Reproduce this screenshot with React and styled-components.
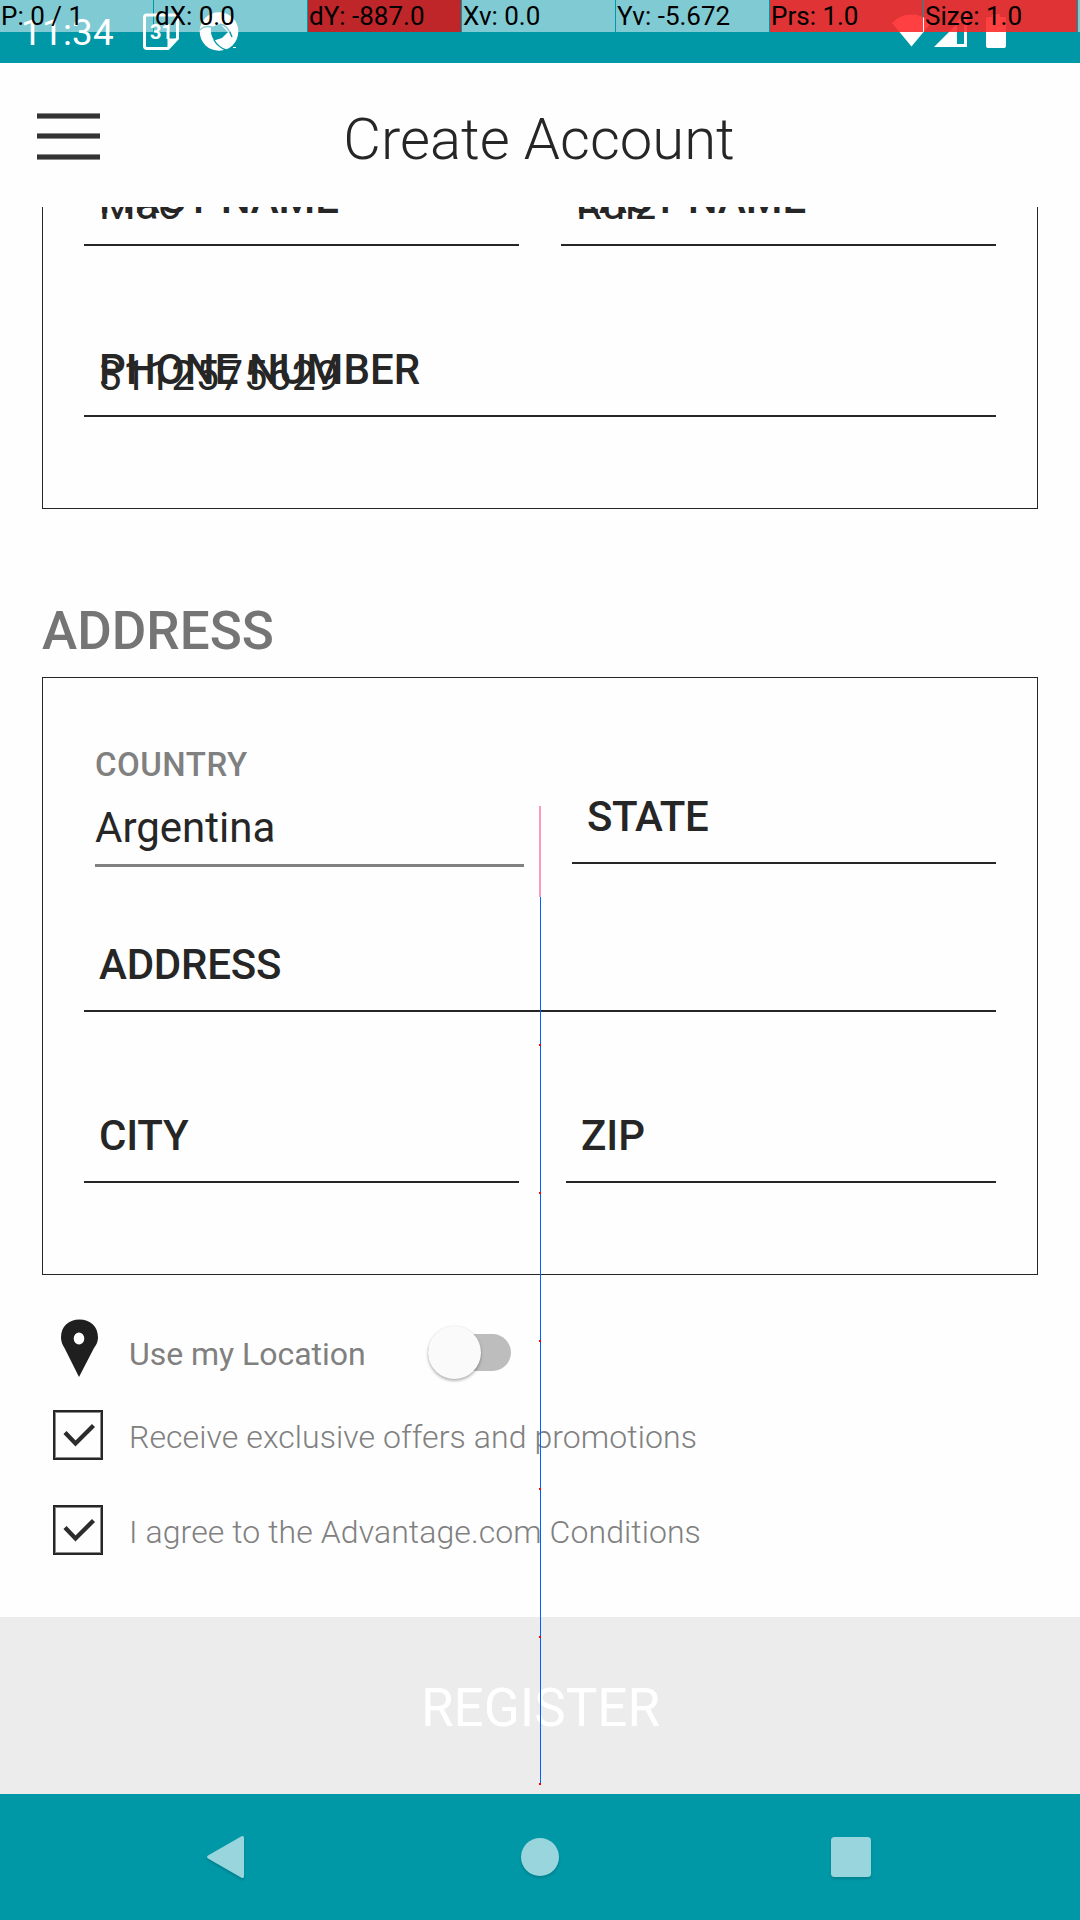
import React from 'react';
import styled, { createGlobalStyle } from 'styled-components';

const GlobalStyle = createGlobalStyle`
  * { box-sizing: border-box; }
  body { margin: 0; background: #fefefe; font-family: Roboto, "Noto Sans", sans-serif; }
`;

const ink = '#262626';
const teal = '#0097a7';

const Screen = styled.div`
  position: relative;
  display: flex;
  flex-direction: column;
  width: 1080px;
  height: 1920px;
  overflow: hidden;
  background: #fefefe;
`;

const StatusBar = styled.div`
  position: relative;
  display: flex;
  flex: none;
  height: 63px;
  padding-left: 21px;
  background: ${teal};
`;
const Clock = styled.div`
  width: 121px;
  padding-top: 11px;
  color: #fff;
  font-size: 36.75px;
  line-height: 44px;
  letter-spacing: 0.3px;
`;
const StatusIcons = styled.svg`
  flex: none;
  width: ${(p) => p.$w}px;
  height: 63px;
  margin-left: ${(p) => p.$ml || 0}px;
`;

const PointerBar = styled.div`
  position: absolute;
  inset: 0 0 auto 0;
  display: grid;
  grid-template-columns: repeat(7, 153px) 2px;
  column-gap: 1px;
  height: 32px;
`;
const PointerCell = styled.div`
  padding-left: 1px;
  overflow: hidden;
  color: #000;
  font-size: 26px;
  line-height: 33px;
  white-space: nowrap;
  background: ${(p) =>
    p.$tone === 'moved'
      ? 'rgba(255,0,0,.75)'
      : p.$tone === 'pressed'
      ? 'linear-gradient(rgba(255,0,0,.75), rgba(255,0,0,.75)), rgba(255,255,255,.5)'
      : 'rgba(255,255,255,.5)'};
`;

const Header = styled.header`
  display: grid;
  grid-template-columns: 136px 1fr 136px;
  align-items: center;
  flex: none;
  height: 144px;
`;
const MenuButton = styled.div`
  display: flex;
  flex-direction: column;
  gap: 14.5px;
  width: 63px;
  margin: 2px 0 0 36.5px;
`;
const MenuBar = styled.span`
  height: 6px;
  background: #333;
  box-shadow: inset 0 1px #8a8a8a, inset 0 -1px #8a8a8a;
`;
const Title = styled.h1`
  margin: 8px 2px 0 0;
  color: ${ink};
  font-size: 58px;
  font-weight: 300;
  line-height: 68px;
  text-align: center;
`;

const Content = styled.main`
  display: flex;
  flex-direction: column;
  flex: none;
  height: 1587px;
  overflow: hidden;
`;
const Card = styled.section`
  flex: none;
  margin: ${(p) => p.$mt || 0}px 42px 0;
  padding: 0 41px 91px;
  border: 1px solid ${ink};
`;
const Heading = styled.h2`
  flex: none;
  margin: 91px 42px 15px;
  color: #757575;
  font-size: 53px;
  font-weight: 500;
  line-height: 62px;
`;
const Row = styled.div`
  display: flex;
  align-items: stretch;
  gap: ${(p) => p.$gap || 42}px;
  height: ${(p) => p.$h}px;
`;
const Field = styled.div`
  display: grid;
  align-items: end;
  flex: ${(p) => (p.$w ? `0 0 ${p.$w}px` : 1)};
  margin-bottom: ${(p) => p.$mb || 0}px;
  padding-left: 15px;
  border-bottom: 2px solid ${ink};
`;
const FieldLabel = styled.label`
  grid-area: 1 / 1;
  margin-bottom: 20px;
  color: ${ink};
  font-size: 42px;
  font-weight: 500;
  line-height: 50px;
  letter-spacing: ${(p) => p.$tracking}px;
`;
const FieldValue = styled.span`
  grid-area: 1 / 1;
  margin-bottom: 14px;
  color: ${ink};
  font-size: 42px;
  line-height: 50px;
  letter-spacing: ${(p) => p.$tracking}px;
`;
const Select = styled.div`
  display: flex;
  flex-direction: column;
  justify-content: flex-end;
  width: 429px;
  margin-left: 11px;
  padding-bottom: 11px;
  border-bottom: 3px solid #808080;
`;
const SelectLabel = styled.span`
  margin-bottom: 18px;
  color: #808080;
  font-size: 33px;
  font-weight: 500;
  line-height: 40px;
  letter-spacing: 0.5px;
`;
const SelectValue = styled.span`
  color: ${ink};
  font-size: 42px;
  line-height: 50px;
`;

const Options = styled.section`
  display: flex;
  flex-direction: column;
  gap: 1px;
  flex: 1;
  padding: 42px 0 0 53px;
`;
const OptionRow = styled.div`
  display: flex;
  align-items: center;
  height: ${(p) => p.$h}px;
`;
const OptionText = styled.span`
  width: ${(p) => p.$w || 'auto'};
  margin-left: 26px;
  padding-top: ${(p) => p.$pt}px;
  color: #808080;
  font-size: 32px;
  font-weight: ${(p) => p.$weight};
  line-height: 40px;
  letter-spacing: ${(p) => (p.$weight === 300 ? 0.08 : -0.03)}px;
  white-space: nowrap;
`;
const PinIcon = styled.svg`
  width: 50px;
  height: 60px;
  margin-top: -9px;
`;
const Checkbox = styled.div`
  width: 50px;
  height: 50px;
  border: 2px solid ${ink};
  box-shadow: inset 0 0 0 1px #8c8c8c;
`;
const CheckIcon = styled.svg`
  display: block;
  width: 46px;
  height: 46px;
`;
const Track = styled.div`
  width: 83px;
  height: 37px;
  border-radius: 19px;
  background: #bdbdbd;
`;
const Thumb = styled.div`
  width: 53px;
  height: 53px;
  margin: -8px 0 0 0;
  border-radius: 50%;
  background: #fafafa;
  box-shadow: 0 2px 3px rgba(0, 0, 0, 0.28), 0 0 2px rgba(0, 0, 0, 0.1);
`;
const RegisterButton = styled.div`
  flex: none;
  height: 177px;
  padding: 60px 0 0 1px;
  color: #fff;
  font-size: 53px;
  line-height: 62px;
  text-align: center;
  background: #ececec;
`;

const NavBar = styled.nav`
  flex: none;
  height: 126px;
  background: ${teal};
`;
const NavIcons = styled.svg`
  display: block;
  filter: drop-shadow(0 2px 1px rgba(0, 0, 0, 0.15));
`;

const Trail = styled.div`
  position: absolute;
  top: 806px;
  left: 539px;
  width: 2px;
  height: 979px;
`;
const TrailPredicted = styled.div`
  height: 91px;
  background: #ff9abb;
`;
const TrailPath = styled.div`
  width: 1px;
  height: 887px;
  margin-left: 1px;
  background: #0061ff;
`;
const TrailPoint = styled.div`
  position: absolute;
  left: 0;
  top: ${(p) => p.$y}px;
  width: 2px;
  height: 2px;
  background: #f00;
`;

const readings = [
  ['P: 0 / 1'],
  ['dX: 0.0'],
  ['dY: -887.0', 'moved'],
  ['Xv: 0.0'],
  ['Yv: -5.672'],
  ['Prs: 1.0', 'pressed'],
  ['Size: 1.0', 'pressed'],
  [''],
];

const trailPoints = [238, 386, 534, 682, 830, 977];

function TextField({ label, value, mb, width, tracking = -0.2, valueTracking = 0 }) {
  return (
    <Field $mb={mb} $w={width}>
      <FieldLabel $tracking={tracking}>{label}</FieldLabel>
      {value && <FieldValue $tracking={valueTracking}>{value}</FieldValue>}
    </Field>
  );
}

function Checked() {
  return (
    <Checkbox>
      <CheckIcon viewBox="0 0 46 46" fill="none" stroke="#2c2c2c" strokeWidth="4.3">
        <path d="M10 20.500 20.500 31.500 38.500 13.500" />
      </CheckIcon>
    </Checkbox>
  );
}

export default function App() {
  return (
    <Screen>
      <GlobalStyle />
      <StatusBar>
        <Clock>11:34</Clock>
        <StatusIcons $w={100} viewBox="142 0 100 63">
          <path
            d="M147 15H175Q177.500 15 177.500 17.500V38.500L168 48.500H147Q144.500 48.500 144.500 46V17.500Q144.500 15 147 15Z"
            fill="none"
            stroke="#fff"
            strokeWidth="3"
          />
          <path d="M167.500 49V38.500H178Z" fill="#fff" />
          <text x="150" y="39" fill="#fff" fontSize="20" fontWeight="700">31</text>
          <circle cx="219" cy="31.500" r="19.300" fill="#fff" />
          <path d="M211 27 220 24 228 32 222 38 214 40.500Q210 34 211 27Z" fill={teal} />
          <path
            d="M200 30Q204 25 212 27M220 24Q228 25 232 37M214 40Q218 47 226 50"
            fill="none"
            stroke={teal}
            strokeWidth="1.400"
          />
          <path d="M233 47.500H236" stroke="#fff" strokeWidth="1" />
        </StatusIcons>
        <StatusIcons $w={130} $ml={640} viewBox="882 0 130 63">
          <path d="M911.500 46.500 892 23Q900 14.500 911.500 14.500T931 23Z" fill="#fff" />
          <path d="M934 47 957 24V47Z" fill="#fff" />
          <path d="M957 24 965.500 15.500V45.500H957" fill="none" stroke="#fff" strokeWidth="3" />
          <path d="M988 17H992V14H1000V17H1004Q1006 17 1006 19V46Q1006 48 1004 48H988Q986 48 986 46V19Q986 17 988 17Z" fill="#fff" />
        </StatusIcons>
        <PointerBar>
          {readings.map(([text, tone], i) => (
            <PointerCell key={i} $tone={tone}>{text}</PointerCell>
          ))}
        </PointerBar>
      </StatusBar>

      <Header>
        <MenuButton>
          <MenuBar />
          <MenuBar />
          <MenuBar />
        </MenuButton>
        <Title>Create Account</Title>
      </Header>

      <Content>
        <Card $mt={-173}>
          <Row $h={211}>
            <TextField label="FIRST NAME" value="Mac" tracking={-0.05} />
            <TextField label="LAST NAME" value="Ruiz" tracking={0.05} />
          </Row>
          <Row $h={171}>
            <TextField label="PHONE NUMBER" value="3112575629" tracking={0.1} valueTracking={0.5} />
          </Row>
        </Card>

        <Heading>ADDRESS</Heading>
        <Card>
          <Row $h={189} $gap={48}>
            <Select>
              <SelectLabel>COUNTRY</SelectLabel>
              <SelectValue>Argentina</SelectValue>
            </Select>
            <TextField label="STATE" mb={3} tracking={-0.5} />
          </Row>
          <Row $h={145}>
            <TextField label="ADDRESS" />
          </Row>
          <Row $h={171} $gap={47}>
            <TextField label="CITY" width={435} />
            <TextField label="ZIP" tracking={0} />
          </Row>
        </Card>

        <Options>
          <OptionRow $h={70}>
            <PinIcon viewBox="53 1318 50 60">
              <path
                fillRule="evenodd"
                fill="#1f1f1f"
                d="M79 1377 64.500 1348Q61 1343 61 1337.500C61 1326 69 1319.500 79.500 1319.500S98 1326 98 1337.500Q98 1343 94 1348ZM79 1332.500A5.300 6 0 1 0 79 1344.500A5.300 6 0 1 0 79 1332.500Z"
              />
            </PinIcon>
            <OptionText $weight={400} $pt={3} $w="299px">Use my Location</OptionText>
            <Track>
              <Thumb />
            </Track>
          </OptionRow>
          <OptionRow $h={94}>
            <Checked />
            <OptionText $weight={300} $pt={4}>Receive exclusive offers and promotions</OptionText>
          </OptionRow>
          <OptionRow $h={94}>
            <Checked />
            <OptionText $weight={300} $pt={4}>I agree to the Advantage.com Conditions</OptionText>
          </OptionRow>
        </Options>

        <RegisterButton>REGISTER</RegisterButton>
      </Content>

      <NavBar>
        <NavIcons width="1080" height="126" viewBox="0 1794 1080 126" fill="#99d5dc">
          <path d="M208 1855.500 241.500 1836.300Q244 1835 244 1838V1876Q244 1879 241.500 1877.700L208 1858.500Q206 1857 208 1855.500Z" />
          <circle cx="540" cy="1857" r="19" />
          <rect x="831" y="1837" width="40" height="40" rx="3.500" />
        </NavIcons>
      </NavBar>

      <Trail>
        <TrailPredicted />
        <TrailPath />
        {trailPoints.map((y) => (
          <TrailPoint key={y} $y={y} />
        ))}
      </Trail>
    </Screen>
  );
}
